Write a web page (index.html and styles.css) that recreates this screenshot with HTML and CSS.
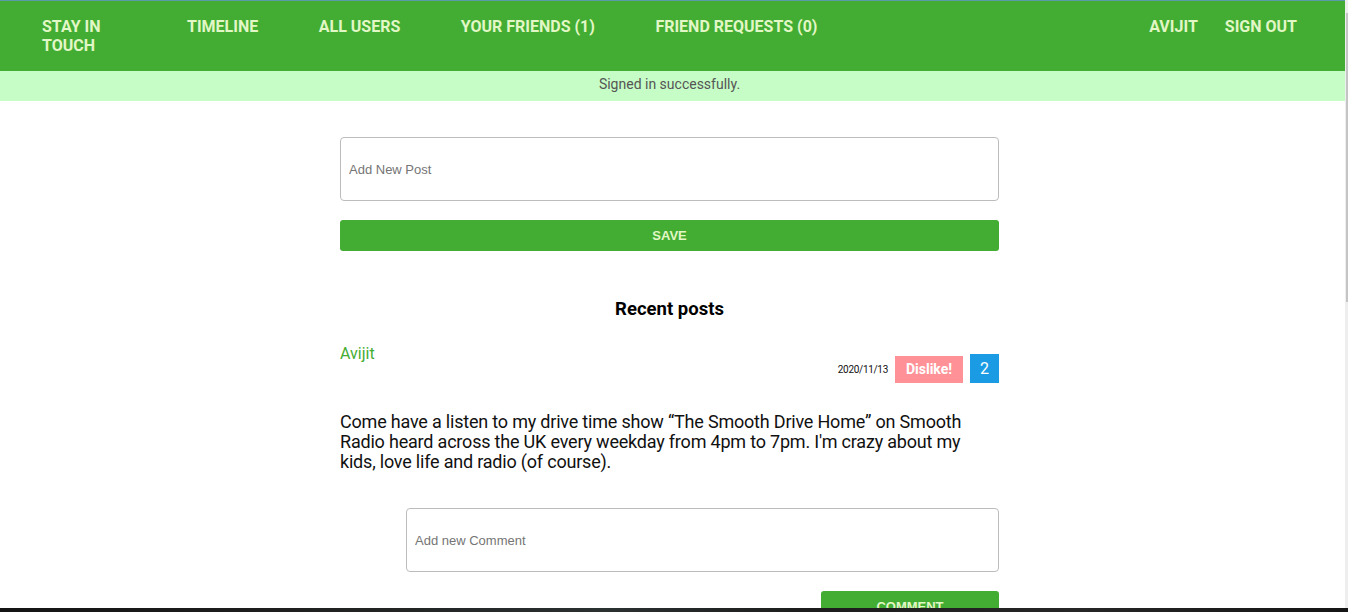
FILE: index.html
```html
<!DOCTYPE html>
<html>
<head>
<meta charset="utf-8">
<link rel="stylesheet" href="styles.css">
</head>
<body>
<div class="page">
  <div class="topline"></div>
  <nav class="nav">
    <a class="brand">STAY IN TOUCH</a>
    <ul class="links">
      <li>TIMELINE</li>
      <li>ALL USERS</li>
      <li>YOUR FRIENDS (1)</li>
      <li>FRIEND REQUESTS (0)</li>
    </ul>
    <ul class="user">
      <li>AVIJIT</li>
      <li>SIGN OUT</li>
    </ul>
  </nav>
  <div class="flash"><p>Signed in successfully.</p></div>
  <main class="main">
    <form class="post-form">
      <input class="field" type="text" placeholder="Add New Post">
      <button class="btn btn-save" type="button">SAVE</button>
    </form>
    <h3 class="title">Recent posts</h3>
    <article class="post">
      <div class="post-head">
        <a class="author">Avijit</a>
        <div class="meta">
          <span class="date">2020/11/13</span>
          <span class="dislike">Dislike!</span>
          <span class="count">2</span>
        </div>
      </div>
      <p class="post-body">Come have a listen to my drive time show “The Smooth Drive Home” on Smooth Radio heard across the UK every weekday from 4pm to 7pm. I'm crazy about my kids, love life and radio (of course).</p>
      <form class="comment-form">
        <input class="field" type="text" placeholder="Add new Comment">
        <button class="btn btn-comment" type="button">COMMENT</button>
      </form>
    </article>
  </main>
</div>
<div class="scrollbar"><div class="thumb"></div></div>
<div class="taskbar"></div>
</body>
</html>
```

FILE: styles.css
```css
html, body {
  margin: 0;
  padding: 0;
  height: 612px;
  overflow: hidden;
  background: #fff;
  font-family: Roboto, "Liberation Sans", sans-serif;
}
.page {
  width: 1345px;
}
.topline {
  height: 1px;
  background: #5b9aa8;
}
.nav {
  height: 70px;
  background: #43ad33;
  display: flex;
  align-items: flex-start;
  padding: 16px 48px 0 42px;
  box-sizing: border-box;
  color: #e2f7c6;
  font-weight: 700;
  font-size: 16px;
  line-height: 19px;
}
.brand {
  width: 85px;
  margin-right: 60px;
}
.links, .user {
  list-style: none;
  margin: 0;
  padding: 0;
  display: flex;
}
.links { gap: 60.5px; }
.user { gap: 27px; margin-left: auto; }
.flash {
  height: 30px;
  background: #c6fdc6;
  width: 1345px;
}
.flash p {
  margin: 0;
  width: 1339px;
  text-align: center;
  line-height: 26px;
  padding-top: 0;
  font-size: 14px;
  color: #555;
}
.main {
  width: 659px;
  margin-left: 340px;
}
.post-form {
  padding-top: 36px;
}
.field {
  display: block;
  width: 100%;
  height: 64px;
  box-sizing: border-box;
  border: 1px solid #bcbcbc;
  border-radius: 4px;
  padding: 0 8px;
  font-family: "Liberation Sans", Arial, sans-serif;
  font-size: 13px;
  color: #333;
  outline: none;
}
.field::placeholder { color: #757575; }
.btn {
  display: block;
  border: 0;
  border-radius: 3px;
  background: #43ad33;
  color: #e2f7c6;
  font-family: "Liberation Sans", Arial, sans-serif;
  font-weight: 700;
  font-size: 13px;
  height: 31px;
  padding: 0;
}
.btn-save {
  width: 100%;
  margin-top: 19px;
}
.title {
  margin: 48px 0 0;
  text-align: center;
  font-size: 18.5px;
  line-height: 21px;
  font-weight: 700;
  color: #000;
}
.post-head {
  margin-top: 24px;
  display: flex;
  justify-content: space-between;
  align-items: flex-start;
}
.author {
  color: #43ad33;
  font-size: 16px;
  line-height: 19px;
}
.meta {
  display: flex;
  align-items: flex-end;
  gap: 7px;
  margin-top: 10px;
}
.date {
  font-size: 10px;
  letter-spacing: -0.3px;
  line-height: 12px;
  color: #111;
  margin-bottom: 7px;
}
.dislike {
  background: #ff9197;
  color: #fff;
  font-weight: 700;
  font-size: 14px;
  height: 27px;
  line-height: 27px;
  width: 68px;
  text-align: center;
}
.count {
  background: #1a9be3;
  color: #fff;
  font-size: 16px;
  height: 29px;
  line-height: 29px;
  width: 29px;
  text-align: center;
}
.post-body {
  margin: 29px 0 0;
  font-size: 18px;
  letter-spacing: -0.2px;
  line-height: 20px;
  color: #111;
}
.comment-form {
  margin: 36px 0 0 66px;
  display: flex;
  flex-direction: column;
  align-items: flex-end;
}
.btn-comment {
  width: 178px;
  margin-top: 19px;
}
.scrollbar {
  position: fixed;
  top: 0;
  right: 0;
  width: 3px;
  height: 612px;
  background: #eeeeee;
}
.thumb {
  margin-top: 13px;
  margin-left: 1px;
  width: 2px;
  height: 289px;
  background: #c4c4c4;
}
.taskbar {
  position: fixed;
  left: 0;
  bottom: 0;
  width: 1348px;
  height: 4px;
  background: linear-gradient(90deg, #141414 0%, #1e1e1e 20%, #2b3030 45%, #1c1c1c 60%, #262626 80%, #151515 100%);
}
```
